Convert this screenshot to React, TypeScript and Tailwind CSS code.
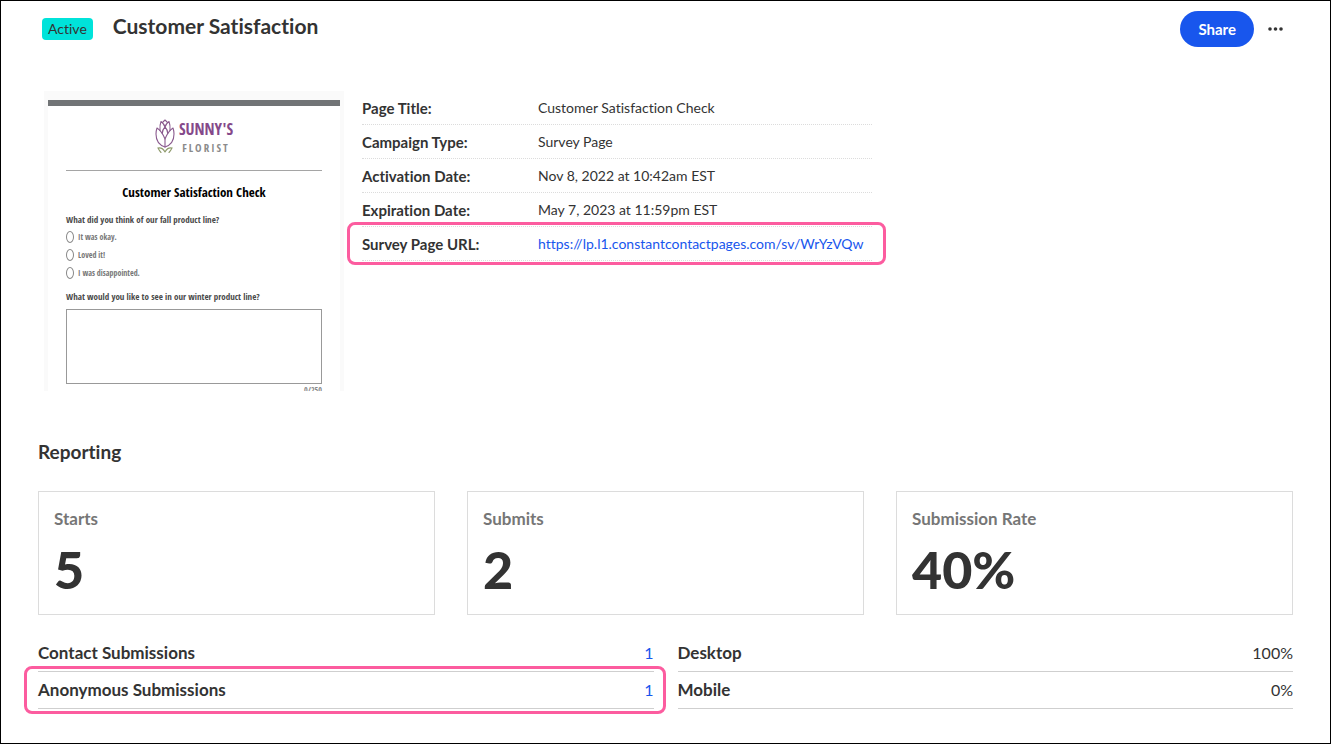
import type { ReactNode } from "react";

const DETAILS = [
  { label: "Page Title:", value: "Customer Satisfaction Check" },
  { label: "Campaign Type:", value: "Survey Page" },
  { label: "Activation Date:", value: "Nov 8, 2022 at 10:42am EST" },
  { label: "Expiration Date:", value: "May 7, 2023 at 11:59pm EST" },
];

const SURVEY_URL = "https://lp.l1.constantcontactpages.com/sv/WrYzVQw";

const STATS = [
  { label: "Starts", value: "5" },
  { label: "Submits", value: "2" },
  { label: "Submission Rate", value: "40%" },
];

const ANSWERS = ["It was okay.", "Loved it!", "I was disappointed."];

function TulipLogo() {
  return (
    <svg width="20" height="36" viewBox="0 0 20 36" fill="none" aria-hidden="true">
      <g stroke="#8a5a8e" strokeWidth="1.1" strokeLinejoin="round" strokeLinecap="round">
        <path d="M10 29C4 27 1 22 1 16C1 14 1.300 12 2 10C5 12 8 16 10 21C12 16 15 12 18 10C18.700 12 19 14 19 16C19 22 16 27 10 29Z" />
        <path d="M10 29V21" />
        <path d="M5 12.500C4.700 9 5 6 6 3.500C8 5 9.500 7 10 9C10.500 7 12 5 14 3.500C15 6 15.300 9 15 12.500" />
        <path d="M7.500 4.500L10 2L12.500 4.500" />
        <path d="M10 9C8 11 7.300 13 7.300 15.500M10 9C12 11 12.700 13 12.700 15.500" />
      </g>
      <path
        d="M10 34C8.500 31 6 29.500 3 30C4 32 5 33.500 6 34.500M10 34C11.500 31 14 29.500 17 30C16 32 15 33.500 14 34.500"
        stroke="#8f9a6c"
        strokeWidth="1.1"
        strokeLinecap="round"
      />
    </svg>
  );
}

function SurveyPreview() {
  return (
    <div className="h-[300px] w-[300px] shrink-0 overflow-hidden border-x-4 border-t-[9px] border-[#fafafa] bg-white font-['Open_Sans_Condensed','Liberation_Sans',sans-serif]">
      <div className="h-1.5 bg-[#717476]" />
      <div className="px-[18px]">
        <div className="mt-3 flex h-9 items-center justify-center gap-1">
          <TulipLogo />
          <div className="flex flex-col items-center">
            <span className="text-base leading-[22px] font-light text-[#85498a]">
              SUNNY&apos;S
            </span>
            <span className="text-[11px] leading-[15px] font-light tracking-[2px] text-[#8b8b8b]">
              FLORIST
            </span>
          </div>
        </div>
        <hr className="mt-4 border-[#a5a5a5]" />
        <h2 className="mt-[11px] text-center text-[13px] leading-5 font-bold text-black">
          Customer Satisfaction Check
        </h2>
        <fieldset className="mt-[10px]">
          <legend className="text-[9px] leading-4 font-bold text-[#4a4a4a]">
            What did you think of our fall product line?
          </legend>
          {ANSWERS.map((answer) => (
            <label
              key={answer}
              className="flex h-[18px] items-center gap-1 text-[8px] text-[#777]"
            >
              <input
                type="radio"
                name="fall-line"
                className="h-3 w-2 appearance-none rounded-[50%] border border-[#888]"
              />
              {answer}
            </label>
          ))}
        </fieldset>
        <label
          htmlFor="winter-line"
          className="mt-[7px] block text-[9px] leading-4 font-bold text-[#4a4a4a]"
        >
          What would you like to see in our winter product line?
        </label>
        <textarea
          id="winter-line"
          className="mt-1 block h-[75px] w-full resize-none border border-[#999]"
        />
        <p className="text-right text-[8px] leading-3 text-[#888]">0/250</p>
      </div>
    </div>
  );
}

function Highlight({ className }: { className: string }) {
  return (
    <span
      className={`pointer-events-none absolute rounded-lg border-[3px] border-[#fc5c9f] ${className}`}
    />
  );
}

interface RowProps {
  label: string;
  children: ReactNode;
}

function DetailRow({ label, children }: RowProps) {
  return (
    <div className="relative flex h-[34px] items-center border-b border-dotted border-[#dcdcdc] pt-px">
      <dt className="w-44 shrink-0 text-[15px] font-bold">{label}</dt>
      <dd className="text-sm whitespace-nowrap">{children}</dd>
    </div>
  );
}

function MetricRow({ label, children }: RowProps) {
  return (
    <div className="relative flex h-[37px] items-center justify-between border-b border-[#cfcfcf]">
      <dt className="text-[17px] font-bold">{label}</dt>
      <dd>{children}</dd>
    </div>
  );
}

export default function App() {
  return (
    <div className="min-h-screen border border-black bg-white px-[37px] pt-[10px] pb-8 font-['Lato',sans-serif] text-[#333] [font-variant-ligatures:none]">
      <header className="flex items-start justify-between pl-1">
        <div className="flex items-start gap-5">
          <span className="mt-[7px] rounded bg-[#00e3da] px-1.5 text-sm leading-[22px]">
            Active
          </span>
          <h1 className="text-[21px] leading-[30px] font-bold">Customer Satisfaction</h1>
        </div>
        <div className="flex items-center gap-[14px] pr-[10px]">
          <button
            type="button"
            className="h-9 rounded-full bg-[#1856ed] px-[18px] text-[15px] font-bold text-white"
          >
            Share
          </button>
          <button type="button" aria-label="More actions">
            <svg width="15" height="4" viewBox="0 0 15 4" fill="#333">
              <circle cx="2" cy="2" r="1.800" />
              <circle cx="7.500" cy="2" r="1.800" />
              <circle cx="13" cy="2" r="1.800" />
            </svg>
          </button>
        </div>
      </header>

      <section className="mt-11 flex gap-[18px] pl-1.5">
        <SurveyPreview />
        <dl className="w-[510px]">
          {DETAILS.map((detail) => (
            <DetailRow key={detail.label} label={detail.label}>
              {detail.value}
            </DetailRow>
          ))}
          <DetailRow label="Survey Page URL:">
            <a href={SURVEY_URL} className="text-[#1856ed]">
              {SURVEY_URL}
            </a>
            <Highlight className="-top-[5px] -right-[14px] -bottom-[5px] -left-[15px]" />
          </DetailRow>
        </dl>
      </section>

      <section className="mt-12">
        <h2 className="text-[19px] leading-[26px] font-bold">Reporting</h2>
        <div className="mt-[26px] grid grid-cols-3 gap-8">
          {STATS.map((stat) => (
            <div key={stat.label} className="h-[124px] border border-[#dcdcdc] px-[15px] pt-[15px]">
              <p className="text-[17px] leading-6 font-bold text-[#767676]">{stat.label}</p>
              <p className="mt-2 text-[52px] leading-[60px] font-black">{stat.value}</p>
            </div>
          ))}
        </div>
        <div className="mt-5 grid grid-cols-2 gap-6 text-base">
          <dl>
            <MetricRow label="Contact Submissions">
              <a href="#contact" className="text-[#1856ed]">
                1
              </a>
            </MetricRow>
            <MetricRow label="Anonymous Submissions">
              <a href="#anonymous" className="text-[#1856ed]">
                1
              </a>
              <Highlight className="-top-1.5 -right-3 -bottom-1.5 -left-[14px]" />
            </MetricRow>
          </dl>
          <dl>
            <MetricRow label="Desktop">100%</MetricRow>
            <MetricRow label="Mobile">0%</MetricRow>
          </dl>
        </div>
      </section>
    </div>
  );
}
